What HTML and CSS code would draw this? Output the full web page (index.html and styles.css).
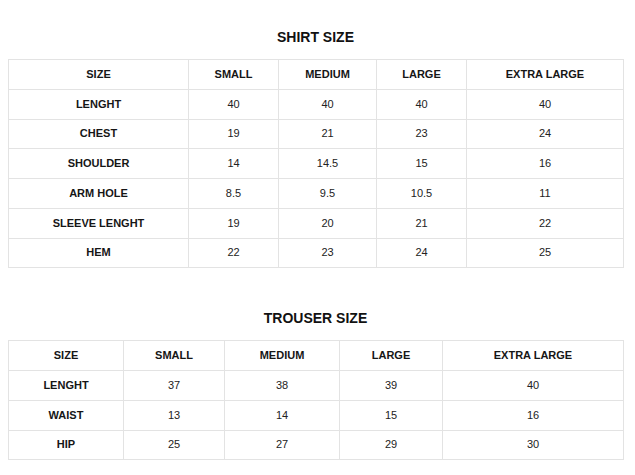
FILE: index.html
```html
<!DOCTYPE html>
<html>
<head>
<meta charset="utf-8">
<link rel="stylesheet" href="styles.css">
</head>
<body>
<main class="page">
  <section class="chart chart-shirt">
    <h2 class="chart-title">SHIRT SIZE</h2>
    <table class="size-table">
      <colgroup>
        <col class="c-shirt-1"><col class="c-shirt-2"><col class="c-shirt-3"><col class="c-shirt-4"><col class="c-shirt-5">
      </colgroup>
      <thead>
        <tr><th>SIZE</th><th>SMALL</th><th>MEDIUM</th><th>LARGE</th><th>EXTRA LARGE</th></tr>
      </thead>
      <tbody>
        <tr><th>LENGHT</th><td>40</td><td>40</td><td>40</td><td>40</td></tr>
        <tr><th>CHEST</th><td>19</td><td>21</td><td>23</td><td>24</td></tr>
        <tr><th>SHOULDER</th><td>14</td><td>14.5</td><td>15</td><td>16</td></tr>
        <tr><th>ARM HOLE</th><td>8.5</td><td>9.5</td><td>10.5</td><td>11</td></tr>
        <tr><th>SLEEVE LENGHT</th><td>19</td><td>20</td><td>21</td><td>22</td></tr>
        <tr><th>HEM</th><td>22</td><td>23</td><td>24</td><td>25</td></tr>
      </tbody>
    </table>
  </section>
  <section class="chart chart-trouser">
    <h2 class="chart-title">TROUSER SIZE</h2>
    <table class="size-table">
      <colgroup>
        <col class="c-tr-1"><col class="c-tr-2"><col class="c-tr-3"><col class="c-tr-4"><col class="c-tr-5">
      </colgroup>
      <thead>
        <tr><th>SIZE</th><th>SMALL</th><th>MEDIUM</th><th>LARGE</th><th>EXTRA LARGE</th></tr>
      </thead>
      <tbody>
        <tr><th>LENGHT</th><td>37</td><td>38</td><td>39</td><td>40</td></tr>
        <tr><th>WAIST</th><td>13</td><td>14</td><td>15</td><td>16</td></tr>
        <tr><th>HIP</th><td>25</td><td>27</td><td>29</td><td>30</td></tr>
      </tbody>
    </table>
  </section>
</main>
</body>
</html>
```

FILE: styles.css
```css
html, body {
  margin: 0;
  padding: 0;
  background: #ffffff;
}
body {
  font-family: "Liberation Sans", Arial, sans-serif;
  color: #111111;
}
.page {
  padding: 29px 8px 0 8px;
  width: 615px;
}
.chart-title {
  margin: 0 0 14px 0;
  font-size: 14px;
  line-height: 16px;
  font-weight: bold;
  text-align: center;
  color: #111111;
}
.chart-trouser {
  margin-top: 42px;
}
.size-table {
  width: 615px;
  table-layout: fixed;
  border-collapse: collapse;
  font-size: 11px;
  line-height: 13px;
}
.size-table th,
.size-table td {
  border: 1px solid #e3e3e3;
  height: 28.75px;
  padding: 0;
  text-align: center;
  vertical-align: middle;
}
.size-table th {
  font-weight: bold;
  color: #161616;
}
.size-table td {
  font-weight: normal;
  color: #222222;
}
.c-shirt-1 { width: 180px; }
.c-shirt-2 { width: 90px; }
.c-shirt-3 { width: 98px; }
.c-shirt-4 { width: 90px; }
.c-shirt-5 { width: 157px; }
.c-tr-1 { width: 115px; }
.c-tr-2 { width: 101px; }
.c-tr-3 { width: 115px; }
.c-tr-4 { width: 103px; }
.c-tr-5 { width: 181px; }
```
